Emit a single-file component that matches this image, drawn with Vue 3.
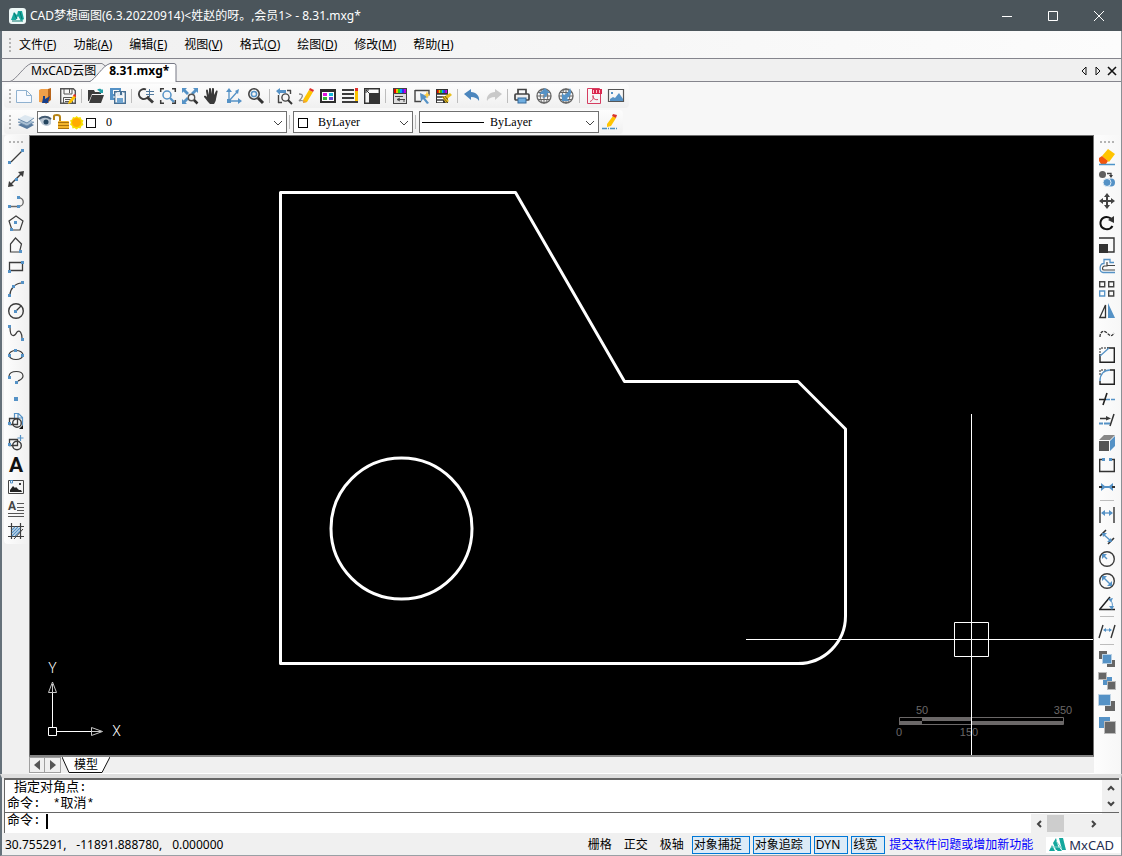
<script setup>
import { ref } from 'vue'

const D = '#3c3c3c'
const B = '#5592c6'
const G = '#686868'
const sq = (x, y, s = 3) => `<rect x="${x}" y="${y}" width="${s}" height="${s}" fill="${B}"/>`
const ln = (d, c = D, w = 1) => `<path d="${d}" fill="none" stroke="${c}" stroke-width="${w}"/>`
const fl = (d, c = D) => `<path d="${d}" fill="${c}"/>`
const box = (x, y, w, h, f) => `<rect x="${x}" y="${y}" width="${w}" height="${h}" fill="${f}"/>`
const circ = (x, y, r, c = D, w = 1.4) => `<circle cx="${x}" cy="${y}" r="${r}" fill="none" stroke="${c}" stroke-width="${w}"/>`
const rainbow = (x, y, w, h) =>
  ['#e00000', '#f0c000', '#20d020', '#00a0ff', '#3030f0', '#c000e0']
    .map((c, i) => box(x + (i * w) / 6, y, w / 6, h, c)).join('')
const globe = circ(8, 8, 7, '#666', 1.3) + ln('M8 1v14M1 8h14M2.2 4.5h11.6M2.2 11.5h11.6', '#666') +
  '<ellipse cx="8" cy="8" rx="3.8" ry="7" fill="none" stroke="#666"/>'
const pencil = fl('M5 12L11 2l4 2-6 10-4 1z', '#ffc400') + fl('M11 2l1-2 4 2-1 2z', '#e0302c') + fl('M5 12l4 2-4 1z', '#e8a040')

const icons = {
  create: ln('M.5 2.5h10l5 5v7H.5zM10.500 2.500v5h5', '#8fb1d0') + fl('M1 3h9v5h5v6H1z', '#f7faff'),
  door: fl('M1 2l2-1h7v10l-3 4-6-1z', '#f0a04a') + fl('M10 1l3-1v12l-5 4-1-1 3-3z', '#b8651b') + fl('M5 8h2v3l5-3-2 6 1 1-7 0 1-5z', '#173f8a'),
  save: ln('M.7.7h12.600l2 2V15.300H.7z', '#555', 1.4) + ln('M4 1v5h8V1M9.500 1v4M3.500 15V9.500h9V15M5 11.500h6M5 13.500h5', '#555') + fl('M9 13l5-6 2 2-5 6-3 1z', '#ffc400') + fl('M13 8l1-2 2 1v2z', '#e0302c'),
  open: fl('M0 2h6l1 2h6v2H4L1 13H0z') + fl('M4 7h12l-3 8H1z') + fl('M9 2c2-2 4-1 5 0l1-1v4h-4l1-1c-1-1-2-2-3-2z', '#26a0a8'),
  saveall: fl('M0 0h11v3H9V2H3v4h2v6H0z', B) + ln('M4.700 3.700h10.600v11.600H4.700z', '#466f94', 1.4) + box(7, 4, 6, 4, '#dfe9f2') + box(10, 4, 2, 3, '#466f94') + box(7, 10, 6, 5, '#6fa4d0') + ln('M3 9h2', '#fff'),
  zoomrt: ln('M8 1.500A5 5 0 1 0 10.500 8', D, 1.8) + ln('M9.500 9.500l5.500 5', D, 3) + ln('M8 3.500h8M8 6.500h8M11.500 1v8', '#527ba0'),
  zoomwin: ln('M.7 4V.7H4M12 .7h3.300V4M15.300 12v3.300H12M4 15.300H.7V12', D, 1.5) + circ(7, 7, 4, B, 1.5) + ln('M10 10l4 4', B, 2.3),
  zoomext: fl('M0 0h5L3.500 1.500 7 5 5 7 1.500 3.500 0 5zM16 0v5l-1.500-1.500L11 7 9 5l3.500-3.500L11 0zM0 16v-5l1.500 1.500L5 9l2 2-3.500 3.500L5 16z', B) + circ(9.5, 9.5, 3.2, '#555', 1.4) + ln('M12 12l3.500 3.500', '#333', 2.5),
  hand: fl('M5 15c-2-2-3-4-5-6 0-2 2-1 3 0L2 3c0-2 2-2 2 0l1 4V1c0-1.500 2-1.500 2 0v5l1-5c0-1.500 2-1 2 0v6l2-4c1-1 2 0 1.500 1L12 11c0 2-1 3-2 5H6z', '#393939'),
  axes: ln('M3 2v11h11M3 13L11 4', B, 1.3) + fl('M3 0l3 4H0zM16 13l-4 3v-6zM13 1l-1 5-3-3zM1 11h4v4H1z', B),
  zoomreal: circ(6, 6, 5.2, '#444', 1.6) + circ(6, 6, 2.6, B, 1.5) + ln('M10 10l5 5', '#333', 3),
  zoomprev: fl('M0 3l4-3v2h6v3H4v2z', B) + ln('M11 2.500h4M14.500 2v4M2.500 7v8M2 14.500h4', '#444', 1.4) + circ(9.5, 9.5, 3.6, '#444', 1.4) + ln('M12 12l4 4', '#333', 2),
  edit: ln('M1 6c5 0 4 3 0 7 3-1 4-1 5 1', '#888', 1.3) + pencil,
  props: box(0, 1, 16, 14, '#2d2d2d') + box(2, 4, 12, 9, '#fff') + box(3, 5, 4, 3, '#e017df') + box(9, 5, 4, 3, '#14b9da') + box(3, 9, 4, 3, '#35ba38') + box(9, 9, 4, 3, '#6741cf'),
  lines: fl('M0 1h12v2H0zM0 5h12v2H0zM0 9h12v2H0zM0 13h16v2H0z') + box(13, 2, 3, 11, '#ffc400') + box(13, 0, 3, 3, '#e0302c'),
  block: ln('M.7 .7h14.600v14.600H.7z', '#333', 1.4) + box(5, 5, 10, 10, '#333') + ln('M2 2l5 5M2 5V2h3', '#333'),
  match: box(1, 0, 14, 16, '#444') + rainbow(2, 1, 12, 4) + box(2, 6, 12, 9, '#ddd') + ln('M3 8.500h8M6 11.500h7M8 10l-3 1.500L8 13M11 13h2', '#444'),
  select: ln('M1 2.500h14v5M1 2v11.500h6', '#444', 1.4) + fl('M6 5l9 4-4 1 4 5-2 1-4-5-2 3z', B) + fl('M13 3l1 3 2 1-2 1-1 3-1-3-2-1 2-1z', '#ffcc3d'),
  brush: box(0, 1, 12, 14, '#333') + rainbow(1, 2, 10, 3) + ln('M1 7.500h10M1 10.500h7M1 13.500h6', '#fff', 1.5) + fl('M6 9l4 6 3-2-2-2 5-4-2-2-5 3z', '#e8bf1e') + ln('M7 9l4 5M9 8l2 3', '#795d12'),
  undo: fl('M0 6l7-5v3c5 0 9 4 8 9-2-3-4-4-8-4v3z', '#4c86bd'),
  redo: fl('M16 6L9 1v3C4 4 0 8 1 13c2-3 4-4 8-4v3z', '#c9c9c9'),
  print: ln('M4 6V1.500h8V6', '#444', 1.7) + '<rect x="1" y="6" width="14" height="6" rx="1" fill="#eee" stroke="#444" stroke-width="1.7"/>' + '<rect x="4" y="10" width="8" height="5" fill="#70aee0" stroke="#35689a"/>',
  webup: globe + fl('M3 6l6-6 5 5h-3c1 3-2 5-5 5 2-1 3-2 2-4z', B),
  webdown: globe + fl('M4 13V5l2 2c3-1 5-4 6-7 2 4 1 8-3 10l2 3z', B),
  pdf: ln('M1.500 .5h12l1 1v14h-13z', '#d53d60') + box(6, 1, 10, 5, '#d9274d') + ln('M7.500 2v3M10.500 2v3M13.500 2v3', '#ffc0cd') + ln('M4 13.500c3-1 4-4 3-6-1 2 2 5 5 4', '#d53d60'),
  image: ln('M.5 1.500h15v12H.5z', '#565656', 1.2) + fl('M2 13v-2l3-2 2 1 4-5 4 6v2z', B) + box(3, 4, 2, 2, B),
  line: ln('M3 13L14 2', D, 1.2) + sq(0, 12) + sq(13, 0),
  xline: ln('M2 14L14 2', D, 1.4) + fl('M0 16l1-6 5 5zM16 0l-6 1 5 5z') + sq(7, 7),
  pline: ln('M2 13.500h8c7 0 7-9 0-9', G, 1.3) + sq(0, 12) + sq(9, 3) + sq(9, 12),
  polygon: ln('M8 1l7 5-3 9H4L1 6z', D, 1.2) + sq(6, 6) + sq(2, 13),
  polygon2: ln('M7.500 1l6 6-2 8h-9V7z', D, 1.2) + sq(11, 13),
  rect: ln('M1.500 3.500h13v8h-13z', D, 1.3) + sq(0, 11) + sq(13, 2),
  arc: ln('M2 14C2 8 7 2 14 2', D, 1.2) + sq(0, 13) + sq(4, 4) + sq(13, 0),
  circle: circ(8, 8, 7.3) + ln('M8 8l5-5', D, 1.3) + sq(6, 7),
  spline: ln('M2 2c0 12 5 9 7 5 3-3 5 2 5 6', D, 1.2) + sq(0, 0) + sq(13, 13),
  ellipse: '<ellipse cx="8" cy="8" rx="7" ry="4.500" fill="none" stroke="#3c3c3c" stroke-width="1.200"/>' + sq(0, 7) + sq(6, 2) + sq(13, 7),
  ellarc: ln('M1 7C2 1 15 1 15 7c0 3-3 4-5 5', D, 1.2) + sq(0, 7) + sq(7, 12),
  point: sq(6, 6, 4),
  insert: ln('M6.500 5V.5h4l4 4v8M10 1v4h4', B, 1.2) + ln('M1.500 5.500h8v6h-8z', D, 1.3) + circ(9, 10, 4.3) + sq(0, 9) + fl('M15 12v4h-4z', '#111'),
  blockadd: ln('M1.500 4.500h8v6h-8z', D, 1.3) + circ(9, 10.5, 4.3) + sq(0, 8) + ln('M12.500 0v6M9.500 3h6', B, 1.2),
  letter: '',
  picture: ln('M.5 1.500h15v13H.5z', '#444') + fl('M2 13v-2l3-4 2 2 1-1 3 3h2l1 2z', '#222') + box(11, 4, 2, 2, D) + ln('M2.500 4V1.500h2V4z', B),
  mtext: '',
  hatch: ln('M3.500 0v16M12.500 0v16M0 3.500h16M0 13.500h16', D, 1.2) + ln('M4 7l3-3M4 10l6-6M4 13l8-8M7 13l5-5', B, 1.4) + ln('M6 16l9-10', D),
  erase: fl('M3 7l6-7 7 5-6 8z', '#ffc400') + fl('M3 7l6 5-2 3H2l-2-3V9z', '#f2570d') + ln('M0 15.500h16', '#4c94c9', 1.5),
  copy: '<circle cx="3.500" cy="3.500" r="3.500" fill="#5f5f5f"/><circle cx="12" cy="11.500" r="4" fill="#5592c6"/><circle cx="8" cy="11.500" r="4" fill="#5592c6" stroke="#e7f1f8"/>' + ln('M8 2.500h4v3', '#444', 1.3) + fl('M10 4h4l-2 3z'),
  move: fl('M8 0l3 4H9v3h3V5l4 3-4 3V9H9v3h2l-3 4-3-4h2V9H4v2L0 8l4-3v2h3V4H5z', '#444'),
  rotate: ln('M12 3.500C6-.5 1 4 1.500 9c1 6 9 7 12 2', '#111', 2) + fl('M9 5l6-4v7z', '#333'),
  scale: ln('M0 1h15v14H9', '#333', 1.4) + box(0, 7, 9, 9, '#333'),
  offset: ln('M15 3.500h-4v-3H5v4C0 4 0 13 4 13.500h12', B, 1.3) + ln('M16 6.500H8v-3M5 7c-2 1-2 4 0 4h11M8 3v4H5', '#444', 1.2),
  array: ln('M.700 .700h5v5h-5zM9.700 .700h5v5h-5zM9.700 10h5v5h-5z', '#444', 1.4) + ln('M.700 10h5v5h-5z', B, 1.3),
  mirror: ln('M6.500 2v12.500H.800z', '#333', 1.3) + fl('M9 0l7 15H9z', B),
  wave: '<path d="M1 12c0-6 4-7 7-4s5 4 7 0" fill="none" stroke="#333" stroke-width="1.300" stroke-dasharray="3 1"/>',
  chamfer: '<path d="M1 6V1h7" fill="none" stroke="#222" stroke-dasharray="2 1"/>' + ln('M1 7v8.300h14.300V1H8', '#222', 1.4) + ln('M1 9l9-8', B, 1.4),
  fillet: '<path d="M1 6V1h7" fill="none" stroke="#222" stroke-dasharray="2 1"/>' + ln('M1 12v3.300h14.300V1H11', '#222', 1.4) + ln('M1 12C1 5 5 1 11 1', B, 1.4),
  trim: ln('M0 8.500h7M4 14L8 2', '#222', 1.6) + '<path d="M7 8.500h9" stroke="#5592c6" stroke-width="1.500" stroke-dasharray="4 1"/>',
  extend: ln('M1 5.500h8M11 13l4-12', '#333', 1.5) + fl('M7 3l5 2.500-5 2z') + '<path d="M0 10.500h4M5 10.500h6" stroke="#5592c6" stroke-width="2"/>',
  cube: fl('M0 5l5-5h11l-5 5z', '#888') + box(0, 6, 10, 10, '#555') + fl('M11 6l5-5v10l-5 5z', B),
  break: ln('M3 2.500H.700v12h14.600v-12H13', '#333', 1.4) + sq(3, 1) + sq(10, 1),
  join: fl('M2 4l5 4-5 4z', B) + fl('M14 4L9 8l5 4z', B) + box(0, 7, 3, 2, '#333') + box(13, 7, 3, 2, '#333') + box(6, 7, 4, 2, B),
  dimlin: ln('M1 0v16M15 0v16', '#333', 1.4) + ln('M3 6h10', B, 1.3) + fl('M2 6l4-3v6zM14 6l-4-3v6z', B),
  dimali: ln('M1 7l6-6M9 15l6-6', '#333', 1.6) + ln('M4 5l8 7', B, 1.4) + fl('M3 4h5L4 8zM13 13H8l4-4z', B),
  radius: circ(8, 8, 7.3) + ln('M4 4l4 4', B, 1.5) + fl('M3 3h5L3 8z', B),
  diameter: circ(8, 8, 7.3) + ln('M4 4l8 8', B, 1.5) + fl('M3 3h5L3 8zM13 13V8l-5 5z', B),
  angle: ln('M0 14.500h16M1 14L11 2', '#222', 1.5) + ln('M10 4c3 2 4 5 3 9', B) + fl('M9 4l5-1-2 4zM10 11h5l-2 4z', B),
  baseline: ln('M0 15L4 2M12 15l4-13', '#333', 1.4) + ln('M5 7h7', B) + fl('M4 7l3-2v4zM13 7l-3-2v4z', B),
  front: box(0, 0, 8, 8, '#666') + box(8, 9, 8, 7, '#666') + '<rect x="3.500" y="3.500" width="9" height="9" fill="#5592c6" stroke="#b7cfe3"/>',
  back: box(4, 4, 9, 8, B) + '<rect x="-.5" y="-.5" width="8" height="7" fill="#666" stroke="#bbb"/><rect x="8.500" y="8.500" width="8" height="8" fill="#666" stroke="#bbb"/>',
  above: box(6, 6, 10, 10, '#666') + '<rect x="-.5" y="-.5" width="12" height="11" fill="#5592c6" stroke="#c2d5e5"/>',
  below: box(0, 0, 11, 11, B) + '<rect x="5.500" y="4.500" width="11" height="12" fill="#666" stroke="#bbb"/>',
  layers: fl('M0 11l8-4 8 4-7 4z', '#587a9e') + fl('M0 8l8-4 8 4-7 4z', '#a9bfd3') + fl('M0 5l7-4 9 3-7 5z', '#dce7f0') + ln('M0 5l9 4 7-5M0 8l9 4 7-4', '#6c8cac'),
  pen: fl('M5 10L11 2l3 2-5 8-4 1z', '#ffc400') + fl('M10 2l1-2 4 1-1 3z', '#d9362d') + '<path d="M0 14.500h16" stroke="#4a8fc0" stroke-width="1.500" stroke-dasharray="5 1 1 1"/>'
}

const topBar = [
  ['create', '新建'], ['door', '打开云图'], ['save', '保存'], null, ['open', '打开'], ['saveall', '另存为'], null,
  ['zoomrt', '实时缩放'], ['zoomwin', '窗口缩放'], ['zoomext', '范围缩放'], ['hand', '平移'], ['axes', '坐标'], ['zoomreal', '缩放'], null,
  ['zoomprev', '上一视图'], ['edit', '编辑'], ['props', '特性'], ['lines', '线型'], ['block', '图块'], null,
  ['match', '图层'], ['select', '选择'], ['brush', '特性匹配'], null, ['undo', '撤销'], ['redo', '重做'], null,
  ['print', '打印'], ['webup', '上传'], ['webdown', '下载'], null, ['pdf', '输出PDF'], ['image', '输出图片']
]
const drawBar = [
  ['line', '直线'], ['xline', '构造线'], ['pline', '多段线'], ['polygon', '正多边形'], ['polygon2', '多边形'], ['rect', '矩形'],
  ['arc', '圆弧'], ['circle', '圆'], ['spline', '样条曲线'], ['ellipse', '椭圆'], ['ellarc', '椭圆弧'], ['point', '点'],
  ['insert', '插入块'], ['blockadd', '创建块'], ['letter', '单行文字'], ['picture', '插入图片'], ['mtext', '多行文字'], ['hatch', '填充']
]
const editBar = [
  ['erase', '删除'], ['copy', '复制'], ['move', '移动'], ['rotate', '旋转'], ['scale', '缩放'], ['offset', '偏移'], ['array', '阵列'],
  ['mirror', '镜像'], ['wave', '光顺曲线'], ['chamfer', '倒角'], ['fillet', '圆角'], ['trim', '修剪'], ['extend', '延伸'],
  ['cube', '分解'], ['break', '打断'], ['join', '合并'], null, ['dimlin', '线性标注'], ['dimali', '对齐标注'], ['radius', '半径标注'],
  ['diameter', '直径标注'], ['angle', '角度标注'], null, ['baseline', '连续标注'], null, ['front', '前置'], ['back', '后置'],
  ['above', '置于对象之上'], ['below', '置于对象之下']
]
const menus = [['文件', 'F'], ['功能', 'A'], ['编辑', 'E'], ['视图', 'V'], ['格式', 'O'], ['绘图', 'D'], ['修改', 'M'], ['帮助', 'H']]
const modes = ref([
  { t: '栅格', on: false }, { t: '正交', on: false }, { t: '极轴', on: false },
  { t: '对象捕捉', on: true }, { t: '对象追踪', on: true }, { t: 'DYN', on: true }, { t: '线宽', on: true }
])
const command = ref('')
</script>

<template>
  <div class="window">
    <header class="titlebar">
      <svg class="app-logo" width="17" height="16" viewBox="0 0 17 16" aria-hidden="true">
        <rect width="17" height="16" rx="3" fill="#eef8f7" />
        <path d="M2 12L5 4l3 3 1-4h4l2 8-3 2-3-5-2 4z" fill="#15a79c" />
        <path d="M3 13h11M5 5l3 6M11 4l2 7" stroke="#08776f" />
      </svg>
      <h1>CAD梦想画图(6.3.20220914)&lt;姓赵的呀。,会员1&gt; - 8.31.mxg*</h1>
      <div class="win-controls">
        <button aria-label="最小化"><svg width="12" height="12"><path d="M1 6.500h10" /></svg></button>
        <button aria-label="最大化"><svg width="12" height="12"><path d="M1.500 1.500h9v9h-9z" /></svg></button>
        <button aria-label="关闭"><svg width="12" height="12"><path d="M1 1l10 10M11 1L1 11" /></svg></button>
      </div>
    </header>

    <nav class="menubar">
      <i class="grip"></i>
      <button v-for="m in menus" :key="m[1]">{{ m[0] }}(<u>{{ m[1] }}</u>)</button>
    </nav>

    <div class="doc-tabs">
      <svg class="tab-shapes" width="180" height="20" viewBox="0 0 180 20" aria-hidden="true">
        <path d="M8 19.500C14 18 22 4 29 1.500H100l4 3" fill="#f0f0f0" stroke="#85858d" />
        <path d="M87 20C94 17 100 4 108 1.500H172q2 0 2 2V20" fill="#fff" stroke="#777985" />
      </svg>
      <button class="doc-tab first">MxCAD云图</button>
      <button class="doc-tab active">8.31.mxg*</button>
      <div class="doc-nav">
        <button aria-label="向左"><svg width="14" height="12"><path d="M9 2v8L5 6z" fill="none" stroke="#111" /></svg></button>
        <button aria-label="向右"><svg width="14" height="12"><path d="M5 2v8l4-4z" fill="none" stroke="#111" /></svg></button>
        <button aria-label="关闭图纸"><svg width="14" height="12"><path d="M3 2l8 8M11 2l-8 8" stroke="#111" stroke-width="1.600" /></svg></button>
      </div>
    </div>

    <div class="toolbars">
      <div class="bar" role="toolbar" aria-label="标准">
        <i class="grip"></i>
        <template v-for="(t, i) in topBar" :key="i">
          <button v-if="t" class="tool" :aria-label="t[1]"><svg class="icon" viewBox="0 0 16 16" v-html="icons[t[0]]"></svg></button>
          <i v-else class="sep"></i>
        </template>
      </div>
      <div class="bar" role="toolbar" aria-label="对象特性">
        <i class="grip"></i>
        <button class="tool layer-btn" aria-label="图层管理"><svg class="icon" viewBox="0 0 16 16" v-html="icons.layers"></svg></button>
        <div class="combo layer">
          <select aria-label="图层"><option>0</option></select>
          <svg class="adorn" width="60" height="18" viewBox="0 0 60 18" aria-hidden="true">
            <path d="M1 6c4-4 9-3 12 0v5c-3 3-7 2-9 0z" fill="#b8c5d2" /><path d="M1 6c4-3 8-3 12 0" fill="none" stroke="#445b72" stroke-width="2" />
            <circle cx="8" cy="9" r="2.500" fill="#24455f" />
            <path d="M16 7V3q0-1 3-1t3 2v4" fill="none" stroke="#b78417" stroke-width="2" />
            <rect x="20" y="8" width="11" height="8" rx="1" fill="#f3b42c" /><path d="M20 9.500h11M20 12.500h11M20 15.500h11" stroke="#a8720d" />
            <path d="M38.500 3l2 1.500 2-.5 1 2.500 2 1-1 2 1 2.500-2 1-1 2.500-2-.5-2 1.500-2-1.500-2 .5-.5-2.500-2-1.500 1-2-1-2 2-1 1-2.500 2 .5z" fill="#f6e000" />
            <circle cx="38.500" cy="9.500" r="4.500" fill="#ffac00" />
            <rect x="48.500" y="5.500" width="9" height="9" fill="#fff" stroke="#111" />
          </svg>
          <svg class="chev" width="10" height="6"><path d="M1 1l4 4 4-4" /></svg>
        </div>
        <i class="sep"></i>
        <div class="combo color">
          <select aria-label="颜色"><option>ByLayer</option></select>
          <i class="swatch"></i>
          <svg class="chev" width="10" height="6"><path d="M1 1l4 4 4-4" /></svg>
        </div>
        <i class="sep"></i>
        <div class="combo ltype">
          <select aria-label="线型"><option>ByLayer</option></select>
          <i class="stroke"></i>
          <svg class="chev" width="10" height="6"><path d="M1 1l4 4 4-4" /></svg>
        </div>
        <button class="tool" aria-label="线型管理"><svg class="icon" viewBox="0 0 16 16" v-html="icons.pen"></svg></button>
      </div>
    </div>

    <div class="workspace">
      <div class="side left" role="toolbar" aria-label="绘图">
        <i class="grip"></i>
        <button v-for="t in drawBar" :key="t[0]" class="tool" :aria-label="t[1]">
          <span v-if="t[0] === 'letter'" class="letter">A</span>
          <span v-else-if="t[0] === 'mtext'" class="mtext">A</span>
          <svg v-else class="icon" viewBox="0 0 16 16" v-html="icons[t[0]]"></svg>
        </button>
      </div>

      <main class="center">
        <svg class="canvas" aria-label="图纸">
          <g transform="translate(-30 -136)">
            <g fill="none" stroke="#fff" stroke-width="3">
              <path d="M280.500 192.500H515.500L624.500 381.500H798L845.500 429V616A47.500 47.500 0 0 1 798 663.500H280.500Z" stroke-linejoin="round" />
              <circle cx="401.500" cy="528.500" r="70.500" />
            </g>
            <g fill="none" stroke="#6b6868">
              <path d="M899.500 717.500H1063.500V724.500H899.500Z" />
              <path d="M899 723H922M922 719H971M971 723H1063" stroke-width="4" />
            </g>
            <g class="scale-text">
              <text x="922" y="714">50</text><text x="1063" y="714">350</text>
              <text x="899" y="736">0</text><text x="969" y="736">150</text>
            </g>
            <g fill="none" stroke="#fff">
              <path d="M746 639.500H1094M971.500 414V756M954.500 622.500H988.500V656.500H954.500Z" />
              <path d="M48.500 727.500H56.500V735.500H48.500ZM52.500 727V693M57 731.500H91" />
              <path d="M52.500 682L48.500 692.500H56.500ZM52.500 684V692M102.500 731.500L91.500 727.500V735.500ZM92 731.500H101" stroke="#c8c8c8" />
            </g>
            <g class="ucs"><text x="52.500" y="673">Y</text><text x="116.500" y="736">X</text></g>
          </g>
        </svg>
        <div class="model-row">
          <button class="step" aria-label="上一布局"><svg width="6" height="10"><path d="M6 0v10L0 5z" fill="#555" /></svg></button>
          <button class="step" aria-label="下一布局"><svg width="6" height="10"><path d="M0 0v10l6-5z" fill="#555" /></svg></button>
          <button class="model-tab">
            <svg width="48" height="16" viewBox="0 0 48 16" aria-hidden="true"><path d="M0 0l7 15.500h33L48 0" fill="#fff" stroke="#111" /></svg>
            <span>模型</span>
          </button>
        </div>
      </main>

      <div class="side right" role="toolbar" aria-label="修改">
        <i class="grip"></i>
        <template v-for="(t, i) in editBar" :key="i">
          <button v-if="t" class="tool" :aria-label="t[1]"><svg class="icon" viewBox="0 0 16 16" v-html="icons[t[0]]"></svg></button>
          <i v-else class="hsep"></i>
        </template>
      </div>
    </div>

    <section class="command">
      <div class="history">
        <div class="log"><p class="indent">指定对角点:</p><p>命令:<span>*取消*</span></p></div>
        <div class="vscroll">
          <button aria-label="向上滚动"><svg width="8" height="6"><path d="M1 5l3-3 3 3" /></svg></button>
          <button aria-label="向下滚动"><svg width="8" height="6"><path d="M1 1l3 3 3-3" /></svg></button>
        </div>
      </div>
      <div class="prompt">
        <label for="cmd">命令:</label><i class="caret"></i>
        <input id="cmd" v-model="command" type="text" autocomplete="off" />
        <div class="hscroll">
          <button aria-label="向左滚动"><svg width="6" height="8"><path d="M5 1L2 4l3 3" /></svg></button>
          <i class="thumb"></i>
          <button aria-label="向右滚动"><svg width="6" height="8"><path d="M1 1l3 3-3 3" /></svg></button>
        </div>
        <i class="corner"></i>
      </div>
    </section>

    <footer class="status">
      <output class="coords"><span>30.755291,</span><span>-11891.888780,</span><span>0.000000</span></output>
      <div class="modes">
        <button v-for="m in modes" :key="m.t" :class="{ on: m.on }" :aria-pressed="m.on" @click="m.on = !m.on">{{ m.t }}</button>
      </div>
      <a href="#feedback">提交软件问题或增加新功能</a>
      <div class="brand">
        <svg width="17" height="14" viewBox="0 0 17 14" aria-hidden="true">
          <path d="M0 13L3 7l3 6zM4 5l3-5 3 12H7zM10 0h4l3 12h-4zM8 13l2-4 3 4z" fill="#12a79d" />
          <path d="M2 9h11M7 3l6 8" stroke="#7dd0c9" />
        </svg>
        <span>MxCAD</span>
      </div>
    </footer>
  </div>
</template>

<style>
html, body { margin: 0; }
</style>

<style scoped>
.window {
  box-sizing: border-box; display: flex; flex-direction: column; height: 100vh; min-height: 800px;
  background: #f0f0f0; color: #000; overflow: hidden;
  font: 12px/16px "Noto Sans", "Noto Sans CJK SC", sans-serif;
}
button { margin: 0; padding: 0; border: 0; background: none; color: inherit; font: inherit; white-space: nowrap; }
i { display: block; flex: none; }
svg { display: block; flex: none; }
.icon { width: 16px; height: 16px; overflow: visible; }

.titlebar { display: flex; align-items: center; flex: none; height: 31px; padding-left: 9px; background: #4b555b; color: #fff; }
h1 { margin: 0 0 0 4px; font-size: 12px; font-weight: 400; flex: 1; white-space: nowrap; }
.win-controls { display: flex; height: 100%; }
.win-controls button { display: grid; place-items: center; width: 46px; }
.win-controls path { fill: none; stroke: #fff; }

.menubar {
  display: flex; align-items: center; flex: none; gap: 17px; height: 27px; padding-left: 7px;
  border-left: 2px solid #65717a; border-right: 1px solid #8a9095; border-bottom: 1px solid #85858d;
  background: linear-gradient(90deg, #f0f0f0, #fcfcfc);
}
.grip { width: 2px; height: 14px; background: repeating-linear-gradient(#b4b4b4 0 2px, transparent 2px 4px); }
.menubar .grip { margin-right: -9px; }

.doc-tabs {
  position: relative; display: flex; align-items: center; flex: none; height: 23px; padding-left: 29px;
  border-left: 2px solid #65717a; border-right: 1px solid #8a9095;
  background: linear-gradient(#85858d, #85858d) 0 100% / 100% 1px no-repeat #f0f0f0;
}
.tab-shapes { position: absolute; left: 0; bottom: 0; }
.doc-tab { position: relative; height: 16px; }
.doc-tab.active { margin-left: 13px; font-weight: 700; }
.doc-nav { display: flex; margin-left: auto; padding-right: 2px; }

.toolbars {
  display: flex; flex-direction: column; align-items: flex-start; flex: none; gap: 2px; padding: 2px 0 1px 2px;
  border-left: 2px solid #65717a; border-right: 1px solid #8a9095; background: #f7f7f7;
}
.bar { display: flex; align-items: center; height: 24px; padding: 0 2px 0 5px; border-radius: 4px; background: linear-gradient(#fdfdfd, #f0f0f0); }
.bar > .grip { margin-right: 2px; }
.tool { display: grid; place-items: center; flex: none; width: 22px; height: 22px; }
.sep { width: 6px; height: 14px; background: linear-gradient(#bdbdbd, #bdbdbd) 2px 0 / 1px 100% no-repeat; }
.layer-btn { width: 24px; padding-left: 2px; }
.combo { position: relative; height: 22px; }
.combo select {
  box-sizing: border-box; width: 100%; height: 100%; margin: 0; border: 1px solid #707070; border-radius: 0; appearance: none;
  background: #fff; color: #000; font: 12px/16px "Liberation Serif", "Noto Sans CJK SC", serif;
}
.layer { width: 250px; } .layer select { padding-left: 68px; }
.color { width: 120px; } .color select { padding-left: 24px; }
.ltype { width: 180px; } .ltype select { padding-left: 70px; }
.chev { position: absolute; right: 4px; top: 9px; pointer-events: none; }
.chev path { fill: none; stroke: #444; }
.adorn { position: absolute; left: 1px; top: 2px; pointer-events: none; }
.swatch { position: absolute; left: 5px; top: 7px; width: 8px; height: 8px; border: 1px solid #000; pointer-events: none; }
.stroke { position: absolute; left: 3px; top: 11px; width: 62px; height: 1px; background: #000; pointer-events: none; }

.workspace {
  display: grid; grid-template-columns: 27px minmax(0, 1fr) 27px; flex: 1; min-height: 0;
  border-left: 2px solid #65717a; border-right: 1px solid #8a9095;
}
.side { display: flex; flex-direction: column; align-items: center; align-self: start; padding: 6px 0 2px; border-radius: 4px; }
.left { margin-left: 2px; padding-right: 1px; background: linear-gradient(90deg, #fdfdfd, #f0f0f0); }
.right { align-self: stretch; padding-right: 1px; background: linear-gradient(90deg, #fdfdfd, #f7f7f7); border-radius: 0; }
.side .grip { width: 14px; height: 2px; margin-bottom: 3px; background: repeating-linear-gradient(90deg, #b4b4b4 0 2px, transparent 2px 4px); }
.hsep { width: 14px; height: 6px; background: linear-gradient(#bdbdbd, #bdbdbd) 0 2px / 100% 1px no-repeat; }
.letter { font: 700 21px/22px Roboto, sans-serif; color: #111; }
.mtext {
  width: 16px; height: 16px; text-align: left; font: 700 12px/11px Roboto, sans-serif; color: #444;
  background:
    linear-gradient(#555, #555) 9px 2px / 7px 1px no-repeat, linear-gradient(#555, #555) 9px 6px / 7px 1px no-repeat,
    linear-gradient(#555, #555) 9px 9px / 7px 1px no-repeat, linear-gradient(#555, #555) 0 12px / 16px 1px no-repeat,
    linear-gradient(#555, #555) 0 15px / 16px 1px no-repeat;
}
.center { display: flex; flex-direction: column; min-width: 0; min-height: 0; }
.canvas {
  box-sizing: border-box; flex: 1; width: 100%; min-height: 0; background: #000;
  border: 1px solid #707070; border-bottom: 2px solid #858585;
}
.scale-text text { fill: #6b6868; font: 11px "Liberation Sans", sans-serif; text-anchor: middle; }
.ucs text { fill: #fff; font: 300 14px Roboto, sans-serif; text-anchor: middle; }
.model-row { display: flex; flex: none; height: 16px; border-bottom: 1px solid #fff; }
.step { box-sizing: border-box; display: grid; place-items: center; width: 16px; height: 16px; border: 1px solid #a0a0a0; }
.step + .step { border-left: 0; }
.model-tab { position: relative; width: 48px; margin-left: 1px; }
.model-tab svg { position: absolute; left: 0; top: 0; }
.model-tab span { position: relative; }

.command {
  flex: none; margin: 0; padding: 0 2px 1px 2px; background: #f0f0f0; border-top: 4px solid #dedede;
  border-left: 2px solid #65717a; border-right: 1px solid #8a9095;
  font: 13px/15px "Liberation Mono", "Noto Sans CJK SC", monospace;
}
.history { display: flex; height: 32px; border: solid #666; border-width: 2px 0 1px 1px; background: #fff; }
.log { flex: 1; padding-left: 2px; }
.log p { margin: 0; line-height: 16px; }
.log .indent { padding-left: 7px; }
.log span { margin-left: 12px; }
.vscroll { display: flex; flex-direction: column; width: 17px; background: #f0f0f0; }
.vscroll button { display: grid; place-items: center; height: 16px; }
.vscroll path, .hscroll path { fill: none; stroke: #444; stroke-width: 2; }
.prompt { display: flex; height: 20px; border-left: 1px solid #666; background: #fff; }
.prompt label { width: 38px; padding-left: 2px; line-height: 16px; }
.caret { width: 2px; height: 15px; margin: 1px 0 0 1px; background: #000; }
.prompt input { flex: 1; min-width: 0; padding: 0 4px; border: 0; outline: 0; background: none; font: inherit; }
.hscroll { display: flex; align-items: stretch; width: 71px; margin-top: 1px; background: #f0f0f0; }
.hscroll button { display: grid; place-items: center; width: 16px; }
.hscroll button:last-child { margin-left: auto; }
.thumb { width: 17px; margin: 1px 0; background: #cdcdcd; }
.corner { width: 17px; background: #f0f0f0; }

.status {
  display: flex; align-items: center; flex: none; height: 21px; padding-left: 3px;
  border-left: 2px solid #65717a; border-right: 1px solid #8a9095; border-bottom: 1px solid #9aa0a5; background: #f0f0f0;
}
.coords { display: flex; flex: 1; gap: 10px; }
.modes { display: flex; gap: 3px; }
.modes button { box-sizing: border-box; height: 18px; border: 1px solid transparent; line-height: 16px; }
.modes button.on { padding: 0 7px 0 1px; border-color: #0078d7; background: #dcebf7; }
.modes button:not(.on) { padding: 0 4px 0 3px; }
.status a { margin-left: 4px; color: #00f; font-size: 12px; text-decoration: none; white-space: nowrap; }
.brand { display: flex; align-items: center; gap: 3px; margin-left: 13px; padding: 0 7px 0 3px; background: #fff; color: #1f2d50; }
.brand span { font-size: 13px; }
</style>
